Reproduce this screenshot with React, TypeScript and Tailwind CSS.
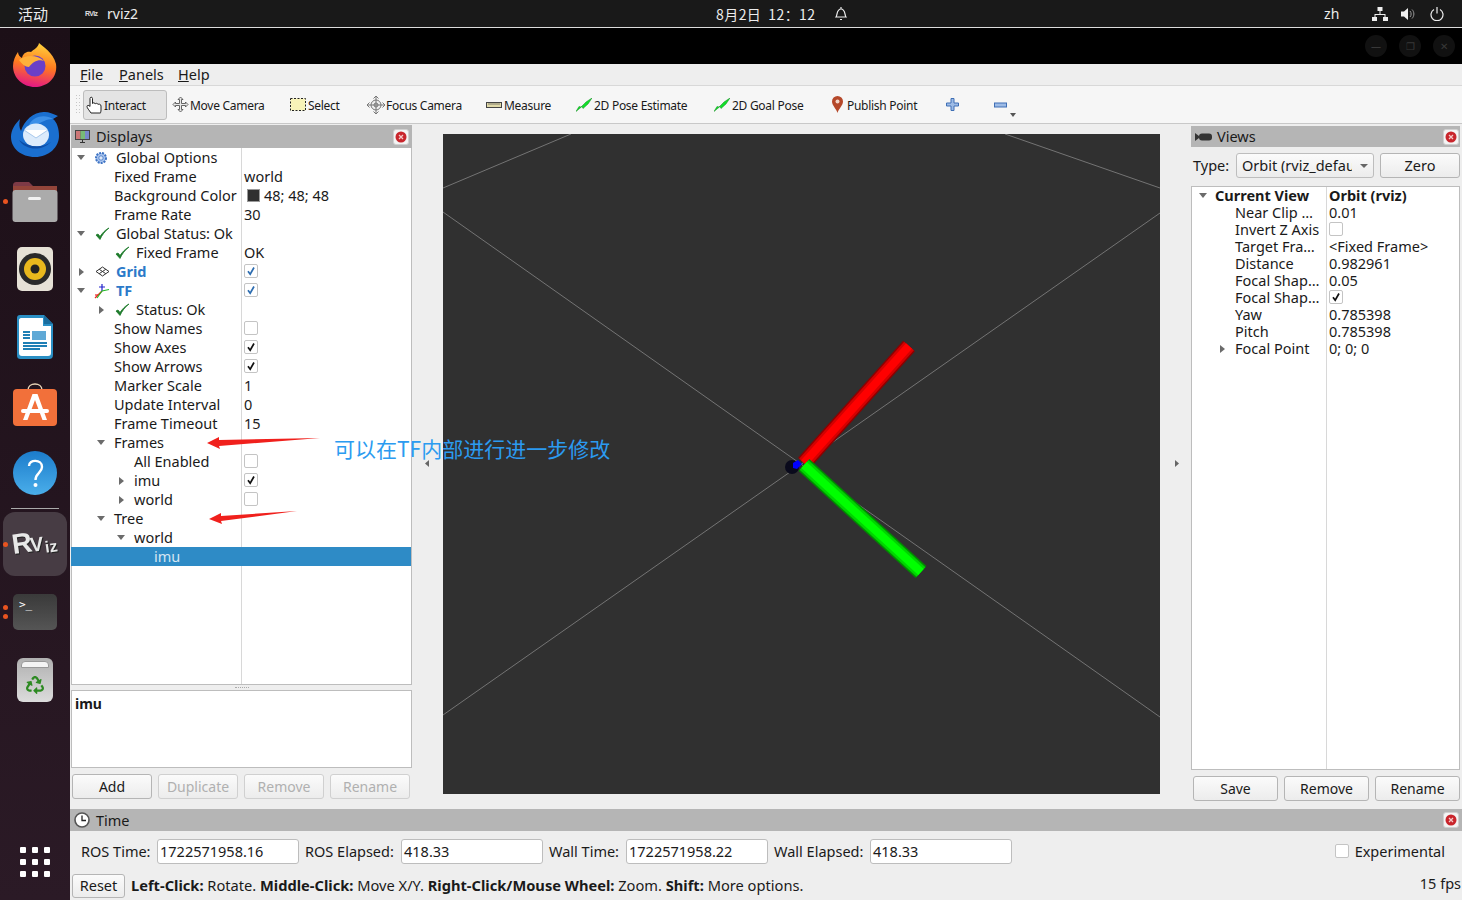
import React from "react";
import { FaRecycle } from "react-icons/fa";

const font = "font-['Noto_Sans','Open_Sans',sans-serif]";

function Arrow({ dir }: { dir: "down" | "right" }) {
  return dir === "down" ? (
    <svg width="8" height="5" viewBox="0 0 8 5" className="shrink-0"><path d="M0 0H8L4 5Z" fill="#6b6b6b" /></svg>
  ) : (
    <svg width="5" height="8" viewBox="0 0 5 8" className="shrink-0 ml-[2px]"><path d="M0 0V8L5 4Z" fill="#6b6b6b" /></svg>
  );
}

function Box({ on, blue }: { on?: boolean; blue?: boolean }) {
  return (
    <span className="-mt-px inline-flex h-[14px] w-[14px] items-center justify-center rounded-[2px] border border-[#c4c4c4] bg-white">
      {on && (
        <svg width="10" height="10" viewBox="0 0 10 10"><path d="M2 5.2L4.2 8.2L8 1.5" fill="none" stroke={blue ? "#2c6cb0" : "#111"} strokeWidth="1.7" /></svg>
      )}
    </span>
  );
}

const Check = () => (
  <svg width="15" height="14" viewBox="0 0 15 14"><path d="M1 8L5 12.5C7 8 10 4 14 1C10 3 7.500 6 5 9.500L3 7Z" fill="#1c7a2a" stroke="#1c7a2a" strokeWidth=".8" /></svg>
);
const Gear = () => (
  <svg width="14" height="14" viewBox="0 0 14 14"><circle cx="7" cy="7" r="5" fill="#a9c4ee" stroke="#3f74c4" strokeWidth="2" strokeDasharray="2 1" /><circle cx="7" cy="7" r="2.200" fill="#dfe9f8" stroke="#3f74c4" strokeWidth=".8" /></svg>
);
const GridIcon = () => (
  <svg width="15" height="11" viewBox="0 0 15 11" fill="none" stroke="#333" strokeWidth="1"><path d="M7.500 1L14 5.500L7.500 10L1 5.500Z M4.200 3.300L10.800 7.700 M10.800 3.300L4.200 7.700" /></svg>
);
const TfIcon = () => (
  <svg width="16" height="16" viewBox="0 0 16 16" fill="none" strokeWidth="1.200"><path d="M8 8L1 15" stroke="#e22" /><path d="M1 12L4 12" stroke="#e22" /><path d="M8 8L8 1M5 4H11" stroke="#22c" /><path d="M8 8L15 6.500" stroke="#2b2" /><path d="M3 15L8 8" stroke="#2b2" /></svg>
);

function Row({ pad, arrow, slot, icon, label, labelCls, value, sel }: { pad: string; arrow?: "down" | "right"; slot?: string; icon?: React.ReactNode; label: string; labelCls?: string; value?: React.ReactNode; sel?: boolean }) {
  return (
    <div className={`flex h-[19px] items-center whitespace-nowrap ${sel ? "-ml-px bg-[#2e8bc6] text-[#d5e6f2]" : ""}`}>
      <div className={`flex h-full shrink-0 items-center ${pad} ${sel ? "w-[171px]" : "w-[170px] border-r border-[#d8d8d8]"}`}>
        {arrow && <span className="flex w-[12px] shrink-0 items-center"><Arrow dir={arrow} /></span>}
        {slot && <span className={`flex shrink-0 items-center ${slot}`}>{icon}</span>}
        <span className={labelCls}>{label}</span>
      </div>
      <div className="flex items-center pl-[2px]">{value}</div>
    </div>
  );
}

function Btn({ label, w, off }: { label: string; w: string; off?: boolean }) {
  return (
    <div className={`flex h-[25px] ${w} items-center justify-center rounded-[3px] border bg-gradient-to-b from-[#fbfbfb] to-[#ececec] ${off ? "border-[#d0d0d0] text-[#b0b0b0]" : "border-[#b5b5b5] text-[#1a1a1a]"}`}>{label}</div>
  );
}

const Close = () => (
  <span className="flex h-[16px] w-[16px] items-center justify-center rounded-[3px] border border-[#d0d0d0] bg-[#f4f4f4]">
    <svg width="12" height="12" viewBox="0 0 12 12"><circle cx="6" cy="6" r="5.500" fill="#c9252c" /><path d="M4 4L8 8M8 4L4 8" stroke="#f6c9c9" strokeWidth="1.300" /></svg>
  </span>
);

const Monitor = () => (
  <svg width="17" height="16" viewBox="0 0 17 16"><rect x="1" y="1" width="15" height="10" fill="#444" /><rect x="2" y="2" width="4.500" height="8" fill="#c77" /><rect x="6.500" y="2" width="4.500" height="8" fill="#7b7" /><rect x="11" y="2" width="4" height="8" fill="#78c" /><path d="M6 13H11V14H6Z M8 11H9V13H8Z" fill="#333" /></svg>
);
const Camera = () => (
  <svg width="17" height="10" viewBox="0 0 17 10"><path d="M0 1L4 4V6L0 9Z" fill="#333" /><rect x="4" y="1.500" width="13" height="7" rx="3" fill="#333" /></svg>
);
const Clock = () => (
  <svg width="16" height="16" viewBox="0 0 16 16"><circle cx="8" cy="8" r="7" fill="#fff" stroke="#555" strokeWidth="1.600" /><path d="M8 3.500V8.500H12" fill="none" stroke="#222" strokeWidth="1.300" /></svg>
);

const HandIcon = () => (
  <svg width="17" height="18" viewBox="0 0 17 18" fill="#fff" stroke="#222" strokeWidth="1"><path d="M5 17C3 14 1 12 1 10.500C1 9 3 9 4 10.500V2.500C4 0.800 6.500 0.800 6.500 2.500V7.500C7 6.500 9 6.500 9.200 8C9.700 7 11.700 7 12 8.500C12.500 7.800 15 8 15 10V14C15 15.500 14.500 16.500 14.500 17Z" /></svg>
);
const MoveIcon = () => (
  <svg width="17" height="17" viewBox="0 0 17 17" fill="#e8e8e8" stroke="#555" strokeWidth=".9"><path d="M8.500 1L11 3.500H9.500V7.500H13.500V6L16 8.500L13.500 11V9.500H9.500V13.500H11L8.500 16L6 13.500H7.500V9.500H3.500V11L1 8.500L3.500 6V7.500H7.500V3.500H6Z" /></svg>
);
const SelectIcon = () => (
  <svg width="16" height="13" viewBox="0 0 16 13"><rect x=".5" y=".5" width="15" height="12" fill="#f8f3b8" stroke="#222" strokeDasharray="2 1.500" /></svg>
);
const FocusIcon = () => (
  <svg width="18" height="18" viewBox="0 0 18 18" fill="none" stroke="#777" strokeWidth="1"><circle cx="9" cy="9" r="5" fill="#eee" /><circle cx="9" cy="9" r="2" /><path d="M9 0V18M0 9H18M6.500 2.500L9 0L11.500 2.500M6.500 15.500L9 18L11.500 15.500M2.500 6.500L0 9L2.500 11.500M15.500 6.500L18 9L15.500 11.500" /></svg>
);
const RulerIcon = () => (
  <svg width="16" height="6" viewBox="0 0 16 6"><rect x=".5" y=".5" width="15" height="5" fill="#e0d9a8" stroke="#444" /><path d="M3 1V3M5 1V3M7 1V3M9 1V3M11 1V3M13 1V3" stroke="#555" strokeWidth=".7" /></svg>
);
const PoseIcon = () => (
  <svg width="16" height="14" viewBox="0 0 16 14"><path d="M0 13.500L3 8.500L5 9L10 4L16 0L12 6L7 10.500L6 8.500Z" fill="#12e02a" stroke="#0a8a1a" strokeWidth=".5" /></svg>
);
const PinIcon = () => (
  <svg width="11" height="17" viewBox="0 0 11 17"><path d="M5.500 17C4.500 13 0 9.500 0 5.500A5.500 5.500 0 0 1 11 5.500C11 9.500 6.500 13 5.500 17Z" fill="#b5482a" /><circle cx="5.500" cy="5.500" r="2" fill="#f3d6c8" /></svg>
);

function Tool({ w, gap, icon, iw, label, active }: { w: string; gap: string; icon: React.ReactNode; iw: string; label: string; active?: boolean }) {
  return (
    <div className={`flex h-[30px] shrink-0 items-center ${w} ${gap} ${active ? "rounded-[3px] border border-[#bdbdbd] bg-[#e4e4e4]" : ""}`}>
      <span className={`flex shrink-0 items-center ${iw}`}>{icon}</span>
      <span className="ml-[1px] pt-[2px] text-[12px] tracking-[-0.28px] text-[#1a1a1a]">{label}</span>
    </div>
  );
}

function Field({ label, value, cls, lw }: { label: string; value: string; cls: string; lw: string }) {
  return (
    <div className={`flex items-center ${cls}`}>
      <span className={lw}>{label}</span>
      <span className="flex h-[25px] w-[142px] items-center rounded-[3px] border border-[#bdbdbd] bg-white pl-[2px]">{value}</span>
    </div>
  );
}

function Slot({ cls, children }: { cls: string; children: React.ReactNode }) {
  return <div className={`flex w-[70px] shrink-0 items-center justify-center ${cls}`}>{children}</div>;
}

const Firefox = () => (
  <svg width="44" height="46" viewBox="0 0 44 46">
    <defs>
      <linearGradient id="ff" x1="0.6" y1="0" x2="0.4" y2="1"><stop offset="0" stopColor="#ffd23c" /><stop offset=".5" stopColor="#ff7a1f" /><stop offset="1" stopColor="#e31587" /></linearGradient>
    </defs>
    <path d="M26 1C30 5 40 10 43 22C45 36 34 45 22 45C10 45 0 36 0 24C0 19 2 14 5 10C5 13 7 15 9 16C10 11 14 9 18 10C21 7 25 6 26 1Z" fill="url(#ff)" />
    <circle cx="22" cy="24" r="10.500" fill="#6a3fc8" />
    <path d="M6 18C12 13 24 12 31 19C25 17 20 20 16 25C12 25 9 22 6 18Z" fill="#ffb03a" />
  </svg>
);
const Thunderbird = () => (
  <svg width="48" height="48" viewBox="0 0 48 48">
    <path d="M24 47C10 47 0 38 0 27C0 20 4 14 9 9C8 14 8 17 10 21C13 10 24 1 34 2C38 2 42 4 47 6L42 9C46 12 48 19 48 26C48 37 38 47 24 47Z" fill="#1a6fd0" />
    <path d="M18 15C22 6 34 4 42 9C36 9 30 12 26 15Z" fill="#3d90e8" />
    <ellipse cx="25" cy="25" rx="13" ry="11.500" fill="#dcebfb" />
    <path d="M13 20L25 28L37 20" fill="#fff" stroke="#a8c8ec" />
    <path d="M8 30C14 40 30 42 40 32C32 38 18 38 8 30Z" fill="#0d4ea8" />
  </svg>
);
const Files = () => (
  <svg width="46" height="42" viewBox="0 0 46 42">
    <path d="M1 5C1 2 2 1 5 1H17L21 5H41C44 5 45 7 45 9V20H1Z" fill="#7d3a46" />
    <path d="M1 5H17L21 5H45V12H1Z" fill="#93453a" />
    <rect x="0.500" y="9" width="45" height="32" rx="3" fill="#ababab" />
    <rect x="16" y="16" width="13" height="3" rx="1.500" fill="#f2f2f2" />
  </svg>
);
const Rhythmbox = () => (
  <svg width="36" height="44" viewBox="0 0 36 44">
    <rect width="36" height="44" rx="5" fill="#e6e1d6" />
    <circle cx="18" cy="22" r="16" fill="#2a2a2a" />
    <circle cx="18" cy="22" r="11" fill="#e8b81d" />
    <circle cx="18" cy="22" r="4.500" fill="#222" />
  </svg>
);
const Writer = () => (
  <svg width="38" height="46" viewBox="0 0 38 46">
    <path d="M4 1H28L37 10V41C37 44 35 45 33 45H5C2 45 1 44 1 41V4C1 2 2 1 4 1Z" fill="#2a8fc4" />
    <path d="M5 4H27V12H35V39C35 41 34 42 32 42H6C4 42 3 41 3 39V6C3 5 4 4 5 4Z" fill="#fff" />
    <path d="M28 1L37 10H28Z" fill="#1a6d9e" />
    <rect x="16" y="17" width="14" height="9" fill="#5fa9d6" />
    <path d="M7 18H14M7 21H14M7 24H14M7 29H31M7 32H31M7 35H24" stroke="#1f7fb5" strokeWidth="1.800" />
  </svg>
);
const Software = () => (
  <svg width="44" height="43" viewBox="0 0 44 43">
    <path d="M15 7C15 -1 29 -1 29 7" fill="none" stroke="#e8d4b8" strokeWidth="1.500" />
    <rect x="0" y="6" width="44" height="37" rx="4" fill="#f2703a" />
    <path d="M19.500 11H24.500L34 37H29.500L22 17L14.500 37H10Z" fill="#fff" />
    <rect x="8" y="26" width="28" height="4" rx="2" fill="#fff" />
  </svg>
);
const Help = () => (
  <svg width="44" height="44" viewBox="0 0 44 44">
    <defs><linearGradient id="hp" x1="0" y1="0" x2="0" y2="1"><stop offset="0" stopColor="#1c7ccb" /><stop offset="1" stopColor="#4aaeea" /></linearGradient></defs>
    <circle cx="22" cy="22" r="22" fill="url(#hp)" />
    <path d="M16 15C16 8 29 8 29 16C29 22 22.500 22 22.500 29" fill="none" stroke="#fff" strokeWidth="2.400" />
    <circle cx="22.500" cy="34" r="2" fill="#fff" />
  </svg>
);

const RVizBig = () => (
  <span className="flex items-end gap-[1px] font-['Liberation_Sans',sans-serif] font-bold text-[#e8e8e8] drop-shadow-[1px_1px_0_#222]">
    <span className="inline-block w-[17px] rotate-[-8deg] text-[28px] leading-[28px]">R</span>
    <span className="mb-[3px] inline-block w-[14px] rotate-[-6deg] text-[20px] leading-[22px]">V</span>
    <span className="mb-[2px] inline-block w-[13px] rotate-[-8deg] text-[16px] leading-[18px]">iz</span>
  </span>
);

export default function App() {
  return (
    <div className={`relative flex h-[900px] w-[1462px] flex-col overflow-hidden bg-[#eeeeee] text-[14px] leading-none text-[#1a1a1a] ${font}`}>
      {/* top bar */}
      <div className="relative flex h-[28px] shrink-0 items-center border-b border-[#dcdcdc] bg-[#191919] text-[#ececec]">
        <span className="ml-[18px] w-[67px] font-['Noto_Sans_CJK_SC',sans-serif] text-[15px]">活动</span>
        <span className="w-[14px] font-['Liberation_Sans',sans-serif] text-[7px] font-bold tracking-[-0.6px] text-[#ddd]">RViz</span>
        <span className="ml-[8px] text-[14px]">rviz2</span>
        <span className="ml-[578px] w-[100px] font-['Noto_Sans_CJK_SC',sans-serif] text-[14px] tracking-[0.4px]">8月2日&nbsp;&nbsp;12：12</span>
        <svg className="ml-[18px]" width="14" height="16" viewBox="0 0 14 16" fill="none" stroke="#eee" strokeWidth="1.200"><path d="M2 11C3.500 9 2.500 3 7 3C11.500 3 10.500 9 12 11ZM6 13.500H8M7 1V3" /></svg>
        <span className="ml-[476px] text-[14px]">zh</span>
        <svg className="ml-[33px]" width="16" height="14" viewBox="0 0 16 14" fill="#eee"><rect x="5.500" y="0" width="5" height="4" /><rect x="0" y="10" width="5" height="4" /><rect x="11" y="10" width="5" height="4" /><path d="M7.500 4H8.500V7H13.500V10H12.500V8H3.500V10H2.500V7H7.500Z" /></svg>
        <svg className="ml-[13px]" width="15" height="14" viewBox="0 0 15 14" fill="#eee"><path d="M0 4.500H3L7 1V13L3 9.500H0Z" /><path d="M9 4C10.500 5.500 10.500 8.500 9 10M11 2.500C13.500 5 13.500 9 11 11.500" fill="none" stroke="#999" strokeWidth="1" /></svg>
        <svg className="ml-[14px]" width="14" height="14" viewBox="0 0 14 14" fill="none" stroke="#eee" strokeWidth="1.200"><path d="M4 2.500A6 6 0 1 0 10 2.500M7 0V6.500" /></svg>
      </div>

      <div className="flex min-h-0 flex-1">
        {/* dock */}
        <div className="relative flex w-[70px] shrink-0 flex-col bg-gradient-to-b from-[#1c0f17] to-[#2b1a26]">
          <Slot cls="mt-[3px] h-[68px]"><Firefox /></Slot>
          <Slot cls="h-[70px]"><Thunderbird /></Slot>
          <Slot cls="h-[66px]"><Files /></Slot>
          <Slot cls="h-[68px]"><Rhythmbox /></Slot>
          <Slot cls="h-[68px]"><Writer /></Slot>
          <Slot cls="h-[66px]"><Software /></Slot>
          <Slot cls="h-[71px]"><Help /></Slot>
          <div className="mx-[11px] h-px bg-[#aaa]" />
          <div className="mx-[3px] mt-[3px] flex h-[64px] items-center justify-center rounded-[12px] bg-[#473c44]"><RVizBig /></div>
          <Slot cls="h-[72px]">
            <div className="flex h-[36px] w-[44px] items-start rounded-[5px] bg-gradient-to-b from-[#3a3a3a] to-[#555] pl-[6px] pt-[5px] font-['DejaVu_Sans_Mono',monospace] text-[11px] text-white">&gt;_</div>
          </Slot>
          <Slot cls="h-[64px]">
            <div className="relative flex h-[44px] w-[36px] items-end justify-center rounded-[6px] bg-gradient-to-b from-[#b0b0b0] to-[#dcdcdc] pb-[8px]">
              <span className="absolute left-[4px] right-[4px] top-[3px] h-[7px] rounded-t-[4px] border border-[#999] bg-[#f4f4f4]" />
              <FaRecycle size={18} color="#2d8a22" />
            </div>
          </Slot>
          <div className="mx-auto mt-[135px] grid w-[30px] grid-cols-3 gap-[6px]">
            {[0, 1, 2, 3, 4, 5, 6, 7, 8].map((i) => <span key={i} className="h-[6px] w-[6px] rounded-[1px] bg-white" />)}
          </div>
          <span className="absolute left-[3px] top-[171px] h-[5px] w-[5px] rounded-full bg-[#e95420]" />
          <span className="absolute left-[3px] top-[514px] h-[5px] w-[5px] rounded-full bg-[#e95420]" />
          <span className="absolute left-[3px] top-[577px] h-[5px] w-[5px] rounded-full bg-[#e95420]" />
          <span className="absolute left-[3px] top-[586px] h-[5px] w-[5px] rounded-full bg-[#e95420]" />
        </div>

        {/* window */}
        <div className="flex min-w-0 flex-1 flex-col">
          <div className="flex h-[36px] shrink-0 items-center justify-end gap-[12px] bg-black pr-[7px]">
            {["—", "❐", "✕"].map((g) => (
              <span key={g} className="flex h-[22px] w-[22px] items-center justify-center rounded-full bg-[#111] text-[10px] text-[#383838]">{g}</span>
            ))}
          </div>
          <div className="flex h-[22px] shrink-0 items-center border-b border-[#d8d8d8] pl-[10px] text-[14.500px]">
            <span className="w-[39px]"><span className="underline">F</span>ile</span>
            <span className="w-[59px]"><span className="underline">P</span>anels</span>
            <span><span className="underline">H</span>elp</span>
          </div>
          {/* toolbar */}
          <div className="flex h-[38px] shrink-0 items-center border-b border-[#c8c8c8] bg-[#f6f6f6]">
            <div className="ml-[6px] mr-[3px] grid h-[20px] w-[4px] grid-cols-2 gap-[1px] opacity-50">
              {[0, 1, 2, 3, 4, 5, 6, 7, 8, 9, 10, 11].map((i) => <span key={i} className="h-px w-px bg-[#999]" />)}
            </div>
            <Tool w="w-[84px]" gap="pl-[2px]" iw="w-[17px]" icon={<HandIcon />} label="Interact" active />
            <Tool w="w-[123px]" gap="pl-[5px]" iw="w-[17px]" icon={<MoveIcon />} label="Move Camera" />
            <Tool w="w-[77px]" gap="" iw="w-[17px]" icon={<SelectIcon />} label="Select" />
            <Tool w="w-[119px]" gap="" iw="w-[18px]" icon={<FocusIcon />} label="Focus Camera" />
            <Tool w="w-[90px]" gap="" iw="w-[17px]" icon={<RulerIcon />} label="Measure" />
            <Tool w="w-[138px]" gap="" iw="w-[17px]" icon={<PoseIcon />} label="2D Pose Estimate" />
            <Tool w="w-[118px]" gap="" iw="w-[17px]" icon={<PoseIcon />} label="2D Goal Pose" />
            <Tool w="w-[114px]" gap="" iw="w-[14px]" icon={<PinIcon />} label="Publish Point" />
            <svg width="13" height="13" viewBox="0 0 13 13" className="shrink-0"><path d="M5 .5H8V5H12.500V8H8V12.500H5V8H.5V5H5Z" fill="#9dbbe6" stroke="#3f6fb5" /></svg>
            <svg width="13" height="6" viewBox="0 0 13 6" className="ml-[35px] shrink-0"><rect x=".5" y="1" width="12" height="4" fill="#9dbbe6" stroke="#3f6fb5" /></svg>
            <svg width="6" height="4" viewBox="0 0 6 4" className="ml-[3px] mt-[20px] shrink-0"><path d="M0 0H6L3 4Z" fill="#555" /></svg>
          </div>

          {/* body */}
          <div className="flex h-[685px] shrink-0">
            {/* Displays */}
            <div className="ml-px flex w-[341px] shrink-0 flex-col pt-px">
              <div className="flex h-[23px] shrink-0 items-center justify-between bg-[#b5b5b5] pl-[3px] pr-[3px]">
                <span className="flex items-center gap-[5px] text-[14.500px]"><Monitor />Displays</span>
                <Close />
              </div>
              <div className="relative h-[537px] shrink-0 border-x border-b border-[#bdbdbd] bg-white text-[14.500px]">
                <Row pad="pl-[5px]" arrow="down" slot="w-[27px] pl-[5px]" icon={<Gear />} label="Global Options" />
                <Row pad="pl-[42px]" label="Fixed Frame" value="world" />
                <Row pad="pl-[42px]" label="Background Color" value={<span className="flex items-center"><span className="ml-[3px] mr-[4px] h-[13px] w-[13px] border border-[#999] bg-[#303030]" />48; 48; 48</span>} />
                <Row pad="pl-[42px]" label="Frame Rate" value="30" />
                <Row pad="pl-[5px]" arrow="down" slot="w-[27px] pl-[6px]" icon={<Check />} label="Global Status: Ok" />
                <Row pad="pl-[43px]" slot="w-[21px]" icon={<Check />} label="Fixed Frame" value="OK" />
                <Row pad="pl-[5px]" arrow="right" slot="w-[27px] pl-[6px]" icon={<GridIcon />} label="Grid" labelCls="font-bold text-[#2c7ac9]" value={<Box on blue />} />
                <Row pad="pl-[5px]" arrow="down" slot="w-[27px] pl-[5px]" icon={<TfIcon />} label="TF" labelCls="font-bold text-[#2c7ac9]" value={<Box on blue />} />
                <Row pad="pl-[25px]" arrow="right" slot="w-[27px] pl-[6px]" icon={<Check />} label="Status: Ok" />
                <Row pad="pl-[42px]" label="Show Names" value={<Box />} />
                <Row pad="pl-[42px]" label="Show Axes" value={<Box on />} />
                <Row pad="pl-[42px]" label="Show Arrows" value={<Box on />} />
                <Row pad="pl-[42px]" label="Marker Scale" value="1" />
                <Row pad="pl-[42px]" label="Update Interval" value="0" />
                <Row pad="pl-[42px]" label="Frame Timeout" value="15" />
                <Row pad="pl-[25px]" arrow="down" slot="w-[5px]" label="Frames" />
                <Row pad="pl-[62px]" label="All Enabled" value={<Box />} />
                <Row pad="pl-[45px]" arrow="right" slot="w-[5px]" label="imu" value={<Box on />} />
                <Row pad="pl-[45px]" arrow="right" slot="w-[5px]" label="world" value={<Box />} />
                <Row pad="pl-[25px]" arrow="down" slot="w-[5px]" label="Tree" />
                <Row pad="pl-[45px]" arrow="down" slot="w-[5px]" label="world" />
                <Row pad="pl-[83px]" label="imu" sel />
                <div className="absolute bottom-0 left-[169px] top-[418px] w-px bg-[#d8d8d8]" />
              </div>
              <div className="flex h-[5px] shrink-0 items-center justify-center"><span className="h-px w-[14px] border-t border-dotted border-[#aaa]" /></div>
              <div className="h-[78px] shrink-0 border border-[#bdbdbd] bg-white px-[3px] pt-[6px] text-[14px] font-bold">imu</div>
              <div className="mt-[6px] flex gap-[6px] pl-px">
                <Btn label="Add" w="w-[80px]" />
                <Btn label="Duplicate" w="w-[80px]" off />
                <Btn label="Remove" w="w-[80px]" off />
                <Btn label="Rename" w="w-[80px]" off />
              </div>
            </div>

            {/* center */}
            <div className="flex w-[31px] shrink-0 items-center justify-center pb-[6px] pr-[1px]"><svg width="4" height="7" viewBox="0 0 4 7"><path d="M4 0V7L0 3.500Z" fill="#666" /></svg></div>
            <div className="mt-[10px] h-[660px] w-[717px] shrink-0 bg-[#303030]">
              <svg width="717" height="660" viewBox="0 0 717 660" className="block">
                <g stroke="#747474" strokeWidth="1" fill="none">
                  <path d="M0 54L128 0M562 0L717 54M0 581L717 79M0 78L717 583" />
                </g>
                <circle cx="349" cy="333" r="7" fill="#0a0a1c" />
                <g fill="none">
                  <path d="M361 329L466 212" stroke="#8c0000" strokeWidth="16" />
                  <path d="M361 329L466 212" stroke="#d40000" strokeWidth="13" />
                  <path d="M361 329L466 212" stroke="#ff0000" strokeWidth="8" />
                  <path d="M361 331L478 438" stroke="#008c00" strokeWidth="16" />
                  <path d="M361 331L478 438" stroke="#00d400" strokeWidth="13" />
                  <path d="M361 331L478 438" stroke="#00ff00" strokeWidth="8" />
                </g>
                <path d="M350 329L355 326L359 330L354 335L350 334Z" fill="#0000ff" />
              </svg>
            </div>
            <div className="flex w-[31px] shrink-0 items-center justify-center pb-[6px] pl-[3px]"><svg width="4" height="7" viewBox="0 0 4 7"><path d="M0 0V7L4 3.500Z" fill="#666" /></svg></div>

            {/* Views */}
            <div className="flex w-[269px] shrink-0 flex-col pt-[2px]">
              <div className="flex h-[21px] shrink-0 items-center justify-between bg-[#b5b5b5] pl-[4px] pr-[1px]">
                <span className="flex items-center gap-[5px] text-[14.500px]"><Camera />Views</span>
                <Close />
              </div>
              <div className="mt-[6px] flex h-[25px] shrink-0 items-center pl-[2px] text-[14.500px]">
                <span className="w-[43px]">Type:</span>
                <div className="flex h-[25px] w-[138px] items-center rounded-[3px] border border-[#bdbdbd] bg-gradient-to-b from-[#fbfbfb] to-[#ececec] pl-[5px]">
                  <span className="w-[110px] overflow-hidden whitespace-nowrap">Orbit (rviz_default_plugins)</span>
                  <svg className="ml-[8px]" width="8" height="4" viewBox="0 0 8 4"><path d="M0 0H8L4 4Z" fill="#666" /></svg>
                </div>
                <div className="ml-[6px]"><Btn label="Zero" w="w-[80px]" /></div>
              </div>
              <div className="relative mt-[8px] h-[584px] shrink-0 border border-[#bdbdbd] bg-white text-[14.500px]">
                {[
                  ["Current View", "Orbit (rviz)", "h"],
                  ["Near Clip …", "0.01"],
                  ["Invert Z Axis", "□"],
                  ["Target Fra…", "<Fixed Frame>"],
                  ["Distance", "0.982961"],
                  ["Focal Shap…", "0.05"],
                  ["Focal Shap…", "✓"],
                  ["Yaw", "0.785398"],
                  ["Pitch", "0.785398"],
                  ["Focal Point", "0; 0; 0", "r"],
                ].map(([a, b, k]) => (
                  <div key={a + b} className={`flex h-[17px] items-center whitespace-nowrap ${k === "h" ? "font-bold" : ""}`}>
                    <div className={`flex w-[135px] shrink-0 items-center ${k === "h" ? "pl-[7px]" : k === "r" ? "pl-[26px]" : "pl-[43px]"}`}>
                      {k === "h" && <span className="w-[16px]"><Arrow dir="down" /></span>}
                      {k === "r" && <span className="w-[17px]"><Arrow dir="right" /></span>}
                      {a}
                    </div>
                    <div className="flex items-center pl-[2px]">{b === "□" ? <Box /> : b === "✓" ? <Box on /> : b}</div>
                  </div>
                ))}
                <div className="absolute bottom-0 left-[134px] top-0 w-px bg-[#d8d8d8]" />
              </div>
              <div className="mt-[6px] flex gap-[6px] pl-[2px]">
                <Btn label="Save" w="w-[85px]" />
                <Btn label="Remove" w="w-[85px]" />
                <Btn label="Rename" w="w-[85px]" />
              </div>
            </div>
          </div>

          {/* time */}
          <div className="flex h-[22px] shrink-0 items-center justify-between bg-[#b5b5b5] pl-[4px] pr-[3px]">
            <span className="flex items-center gap-[6px] text-[14.500px]"><Clock />Time</span>
            <Close />
          </div>
          <div className="flex h-[41px] shrink-0 items-center pb-px text-[14.500px]">
            <Field cls="ml-[11px]" lw="w-[76px]" label="ROS Time:" value="1722571958.16" />
            <Field cls="ml-[6px]" lw="w-[96px]" label="ROS Elapsed:" value="418.33" />
            <Field cls="ml-[6px]" lw="w-[77px]" label="Wall Time:" value="1722571958.22" />
            <Field cls="ml-[6px]" lw="w-[96px]" label="Wall Elapsed:" value="418.33" />
            <span className="ml-auto mr-[6px] h-[14px] w-[14px] rounded-[2px] border border-[#c4c4c4] bg-white" />
            <span className="mr-[17px]">Experimental</span>
          </div>
          <div className="flex h-[28px] shrink-0 items-center pb-[1px]">
            <div className="ml-[2px] flex h-[24px] w-[53px] items-center justify-center rounded-[3px] border border-[#b5b5b5] bg-gradient-to-b from-[#fbfbfb] to-[#ececec] text-[14.500px]">Reset</div>
            <span className="ml-[6px] whitespace-nowrap text-[14.650px]">
              <b>Left-Click:</b> Rotate. <b>Middle-Click:</b> Move X/Y. <b>Right-Click/Mouse Wheel:</b> Zoom. <b>Shift:</b> More options.
            </span>
            <span className="-mt-[5px] ml-auto pr-px text-[14.500px]">15 fps</span>
          </div>
        </div>
      </div>

      {/* annotations drawn over the window */}
      <span className="absolute left-[334px] top-[434px] whitespace-nowrap font-['Noto_Sans_CJK_SC',sans-serif] text-[21px] leading-[28px] text-[#2b9bf0]">可以在TF内部进行进一步修改</span>
      <svg className="absolute left-[205px] top-[434px]" width="120" height="18" viewBox="0 0 120 18"><path d="M2 9L14 3L14 6L115 4L14 12L15 15Z" fill="#f0201c" /></svg>
      <svg className="absolute left-[207px] top-[508px]" width="94" height="18" viewBox="0 0 94 18"><path d="M2 11L14 5L14 8L90 3L14 13L15 16Z" fill="#f0201c" /></svg>
    </div>
  );
}
